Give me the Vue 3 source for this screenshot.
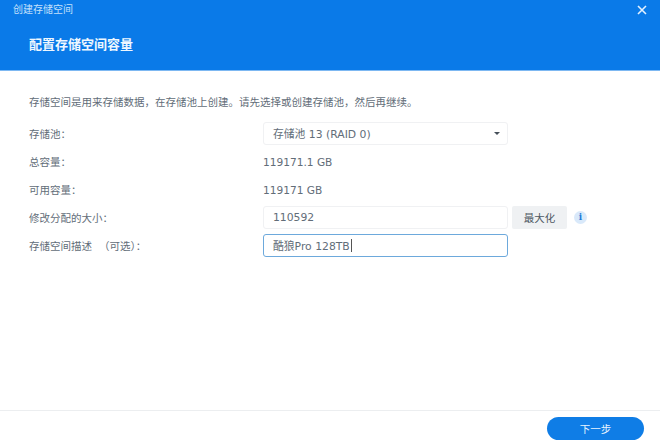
<script setup>
const rows = [
  { label: '总容量：', value: '119171.1 GB' },
  { label: '可用容量：', value: '119171 GB' }
]
</script>

<template>
  <div class="window">
    <header class="head">
      <div class="titlebar">
        <span class="wintitle">创建存储空间</span>
        <svg class="close" width="10" height="10" viewBox="0 0 10 10"><path d="M1 1 9 9M9 1 1 9" stroke="#e3f1ff" stroke-width="1.6" fill="none" /></svg>
      </div>
      <h1 class="title">配置存储空间容量</h1>
    </header>
    <main class="body">
      <p class="intro">存储空间是用来存储数据，在存储池上创建。请先选择或创建存储池，然后再继续。</p>
      <div class="row first">
        <span class="label">存储池：</span>
        <div class="field select">
          <span>存储池 13 (RAID 0)</span>
          <i class="caret"></i>
        </div>
      </div>
      <div v-for="r in rows" :key="r.label" class="row">
        <span class="label">{{ r.label }}</span>
        <span class="value">{{ r.value }}</span>
      </div>
      <div class="row">
        <span class="label">修改分配的大小：</span>
        <div class="field">110592</div>
        <div class="maxbtn">最大化</div>
        <span class="info">i</span>
      </div>
      <div class="row">
        <span class="label">存储空间描述&nbsp;&nbsp; （可选）：</span>
        <div class="field focus">酷狼Pro 128TB<i class="cursor"></i></div>
      </div>
    </main>
    <footer class="foot">
      <div class="next">下一步</div>
    </footer>
  </div>
</template>

<style>
html, body { margin: 0; background: #fff; }
</style>

<style scoped>
.window {
  width: 660px;
  height: 442px;
  display: flex;
  flex-direction: column;
  background: #fff;
  font-family: "Noto Sans CJK SC", "Noto Sans", sans-serif;
  font-size: 11px;
  color: #626d78;
  overflow: hidden;
}
.head {
  height: 71px;
  flex: none;
  background: #0a7ae8;
  border-bottom: 1px solid #7db8f2;
  box-sizing: border-box;
  color: #fff;
}
.titlebar {
  height: 17px;
  padding: 0 14px 0 13px;
  display: flex;
  align-items: center;
  justify-content: space-between;
}
.wintitle { font-size: 10px; line-height: 17px; color: #c4e0fb; }
.close { margin-top: 2px; margin-right: -1px; }
.title {
  margin: 17px 0 0 29px;
  font-size: 13px;
  line-height: 20px;
  font-weight: 700;
  color: #eef7ff;
}
.body { flex: 1; padding: 23px 0 0 29px; }
.intro { margin: 0; line-height: 16px; font-size: 10.5px; }
.row {
  height: 28px;
  display: flex;
  align-items: center;
}
.row.first { margin-top: 9px; }
.label { width: 234px; flex: none; font-size: 10.5px; }
.value { font-family: "DejaVu Sans", sans-serif; font-size: 10.6px; padding-top: 1px; }
.field {
  width: 245px;
  height: 23px;
  box-sizing: border-box;
  flex: none;
  display: flex;
  align-items: center;
  padding-left: 9px;
  border: 1px solid #f0f1f3;
  border-radius: 3px;
  font-family: "DejaVu Sans", "Noto Sans CJK SC", sans-serif;
  font-size: 10.8px;
}
.select { justify-content: space-between; padding-right: 7px; }
.caret {
  width: 0;
  height: 0;
  border-left: 3.5px solid transparent;
  border-right: 3.5px solid transparent;
  border-top: 3.5px solid #46505a;
}
.focus { border-color: #6da9dc; }
.cursor { width: 1px; height: 13px; background: #555; margin-left: 1px; }
.maxbtn {
  width: 55px;
  height: 23px;
  margin-left: 4px;
  background: #eff1f3;
  border-radius: 2px;
  text-align: center;
  line-height: 23px;
  font-size: 10.5px;
  color: #4d5862;
}
.info {
  width: 13px;
  height: 13px;
  margin-left: 7px;
  border-radius: 50%;
  background: #d9e9fa;
  color: #1f7bd8;
  text-align: center;
  line-height: 13px;
  font-family: "DejaVu Serif", serif;
  font-size: 9px;
  font-weight: 700;
}
.foot {
  height: 32px;
  flex: none;
  box-sizing: border-box;
  border-top: 1px solid #eceef0;
  display: flex;
  justify-content: flex-end;
  padding: 6px 16px 0 0;
}
.next {
  width: 97px;
  height: 23px;
  border-radius: 12px;
  background: #0f7de6;
  color: #e8f4ff;
  text-align: center;
  line-height: 23px;
  font-size: 10.5px;
}
</style>
